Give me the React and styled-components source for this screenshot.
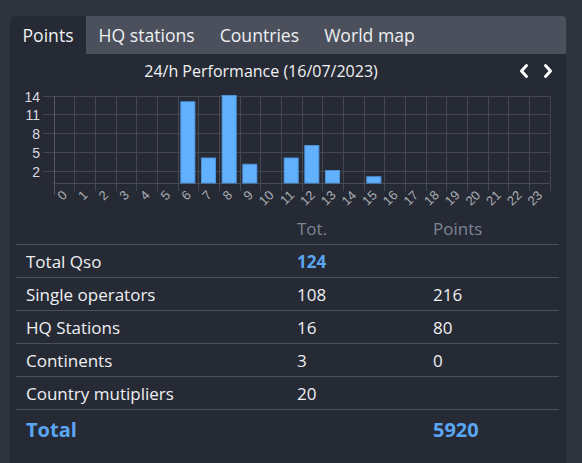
import React from "react";
import styled, { createGlobalStyle } from "styled-components";

const Global = createGlobalStyle`
  html, body { margin: 0; padding: 0; background: #2f333e; overflow: hidden; }
  body { font-family: "Open Sans", "Noto Sans", sans-serif; color: #e9ebee; }
  * { box-sizing: border-box; }
`;

const Page = styled.div`
  height: 463px;
  padding: 16px 16px 0 10px;
  display: flex;
`;

const Card = styled.div`
  flex: 1;
  background: #262a34;
  border-radius: 4px 4px 0 0;
  overflow: hidden;
  display: flex;
  flex-direction: column;
`;

const TabBar = styled.div`
  display: flex;
  height: 38px;
  background: #4b505c;
`;

const Tab = styled.div`
  padding: 0 12.5px;
  display: flex;
  align-items: center;
  font-size: 17.6px;
  color: #eef0f3;
  background: ${(p) => (p.$active ? "#262a34" : "transparent")};
`;

const TitleRow = styled.div`
  display: flex;
  align-items: center;
  height: 34px;
  padding-right: 6px;
`;

const Title = styled.div`
  flex: 1;
  text-align: center;
  font-size: 16px;
  color: #f0f2f5;
`;

const ArrowBtn = styled.div`
  width: 24px;
  height: 24px;
  display: flex;
  align-items: center;
  justify-content: center;
`;

const ChartSvg = styled.svg`
  display: block;
  flex: none;
`;

const Table = styled.div`
  margin: 0 7px 0 6px;
`;

const Row = styled.div`
  display: grid;
  grid-template-columns: 271px 136px 1fr;
  align-items: center;
  box-sizing: content-box;
  height: ${(p) => (p.$tall ? "38px" : "32px")};
  border-bottom: ${(p) => (p.$last ? "none" : "1px solid #4b505b")};
`;

const Cell = styled.div`
  padding-left: 10px;
  font-size: ${(p) => (p.$big ? "20px" : "17px")};
  font-weight: ${(p) => (p.$bold ? 700 : 400)};
  color: ${(p) => (p.$head ? "#7d8494" : p.$blue ? "#5ba6f2" : "#eef0f3")};
  white-space: nowrap;
`;

const Chevron = ({ dir }) => (
  <svg width="12" height="16" viewBox="0 0 12 16">
    <polyline
      points={dir === "left" ? "8.5,2.5 3.5,8 8.5,13.5" : "3.5,2.5 8.5,8 3.5,13.5"}
      fill="none"
      stroke="#ffffff"
      strokeWidth="3"
      strokeLinecap="round"
      strokeLinejoin="round"
    />
  </svg>
);

const values = [0, 0, 0, 0, 0, 0, 13, 4, 14, 3, 0, 4, 6, 2, 0, 1, 0, 0, 0, 0, 0, 0, 0, 0];

const X0 = 53.5;
const X1 = 549.5;
const BW = (X1 - X0) / 24;
const Y0 = 183;
const YT = 95.5;
const UNIT = (Y0 - YT) / 14;

const Chart = () => {
  const ticks = [14, 11, 8, 5, 2];
  return (
    <ChartSvg width="556" height="124" viewBox="10 88 556 124">
      {ticks.map((t) => {
        const y = Math.round(Y0 - t * UNIT) + 0.5;
        return (
          <g key={t}>
            <line x1="43" x2={X1} y1={y} y2={y} stroke="#44474f" strokeWidth="1" />
            <text
              x="40"
              y={y + 5}
              textAnchor="end"
              fontFamily="Liberation Sans, Arial, sans-serif"
              fontSize="14"
              fill="#d9dbe0"
            >
              {t}
            </text>
          </g>
        );
      })}
      {Array.from({ length: 25 }).map((_, i) => {
        const x = Math.round(X0 + i * BW) + 0.5;
        return (
          <line
            key={i}
            x1={x}
            x2={x}
            y1={YT}
            y2={i === 0 ? 195 : 191}
            stroke={i === 0 ? "#55585f" : "#44474f"}
            strokeWidth="1"
          />
        );
      })}
      <line x1={X0} x2={X1} y1={Y0 + 0.5} y2={Y0 + 0.5} stroke="#4a4d55" strokeWidth="1" />
      {values.map((v, i) =>
        v > 0 ? (
          <rect
            key={i}
            x={X0 + i * BW + 3.3}
            y={Y0 - v * UNIT}
            width={BW - 6.6}
            height={v * UNIT}
            fill="#62b1ff"
            stroke="#4d93dc"
            strokeWidth="1"
          />
        ) : null
      )}
      {values.map((_, i) => {
        const cx = X0 + (i + 0.5) * BW + 4;
        const cy = 196;
        return (
          <text
            key={i}
            x={cx}
            y={cy}
            textAnchor="end"
            fontFamily="Liberation Sans, Arial, sans-serif"
            fontSize="13"
            fill="#a9acb3"
            transform={`rotate(-45 ${cx} ${cy})`}
          >
            {i}
          </text>
        );
      })}
    </ChartSvg>
  );
};

const rows = [
  ["Total Qso", "124", "", true],
  ["Single operators", "108", "216"],
  ["HQ Stations", "16", "80"],
  ["Continents", "3", "0"],
  ["Country mutipliers", "20", ""],
];

export default function App() {
  return (
    <>
      <Global />
      <Page>
        <Card>
          <TabBar>
            <Tab $active>Points</Tab>
            <Tab>HQ stations</Tab>
            <Tab>Countries</Tab>
            <Tab>World map</Tab>
          </TabBar>
          <TitleRow>
            <Title>24/h Performance (16/07/2023)</Title>
            <ArrowBtn>
              <Chevron dir="left" />
            </ArrowBtn>
            <ArrowBtn>
              <Chevron dir="right" />
            </ArrowBtn>
          </TitleRow>
          <Chart />
          <Table>
            <Row>
              <Cell />
              <Cell $head>Tot.</Cell>
              <Cell $head>Points</Cell>
            </Row>
            {rows.map(([label, tot, pts, blue]) => (
              <Row key={label}>
                <Cell>{label}</Cell>
                <Cell $blue={blue} $bold={blue}>
                  {tot}
                </Cell>
                <Cell>{pts}</Cell>
              </Row>
            ))}
            <Row $tall $last>
              <Cell $blue $bold $big>
                Total
              </Cell>
              <Cell />
              <Cell $blue $bold $big>
                5920
              </Cell>
            </Row>
          </Table>
        </Card>
      </Page>
    </>
  );
}
